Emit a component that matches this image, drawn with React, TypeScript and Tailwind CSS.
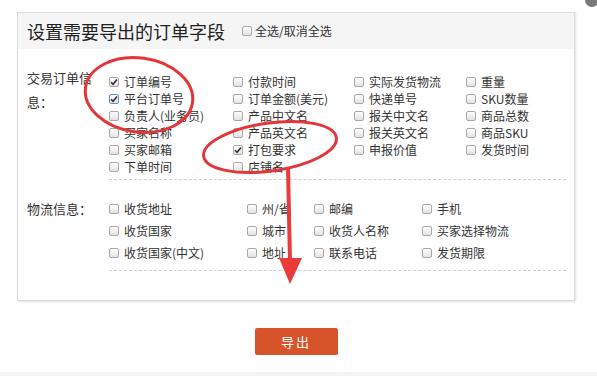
import React from 'react';

type Item = { label: string; checked?: boolean; focus?: boolean };

const orderCols: { w: string; items: Item[] }[] = [
  {
    w: 'w-[124px]',
    items: [
      { label: '订单编号', checked: true },
      { label: '平台订单号', checked: true, focus: true },
      { label: '负责人(业务员)' },
      { label: '买家名称' },
      { label: '买家邮箱' },
      { label: '下单时间' },
    ],
  },
  {
    w: 'w-[121px]',
    items: [
      { label: '付款时间' },
      { label: '订单金额(美元)' },
      { label: '产品中文名' },
      { label: '产品英文名' },
      { label: '打包要求', checked: true },
      { label: '店铺名' },
    ],
  },
  {
    w: 'w-[112px]',
    items: [
      { label: '实际发货物流' },
      { label: '快递单号' },
      { label: '报关中文名' },
      { label: '报关英文名' },
      { label: '申报价值' },
    ],
  },
  {
    w: 'w-[98px]',
    items: [{ label: '重量' }, { label: 'SKU数量' }, { label: '商品总数' }, { label: '商品SKU' }, { label: '发货时间' }],
  },
];

const shipCols: { w: string; items: Item[] }[] = [
  { w: 'w-[138px]', items: [{ label: '收货地址' }, { label: '收货国家' }, { label: '收货国家(中文)' }] },
  { w: 'w-[67px]', items: [{ label: '州/省' }, { label: '城市' }, { label: '地址' }] },
  { w: 'w-[108px]', items: [{ label: '邮编' }, { label: '收货人名称' }, { label: '联系电话' }] },
  { w: 'w-[120px]', items: [{ label: '手机' }, { label: '买家选择物流' }, { label: '发货期限' }] },
];

function Box({ checked, focus }: { checked?: boolean; focus?: boolean }) {
  return (
    <span
      className={
        'relative inline-flex items-center justify-center w-[10px] h-[10px] shrink-0 rounded-[2px] border bg-gradient-to-b from-white to-[#e2e2e2] ' +
        (focus ? 'border-[#6b8fd6]' : 'border-[#a9a9a9]')
      }
    >
      {checked && (
        <svg width="8" height="8" viewBox="0 0 8 8" className="block">
          <path d="M1 4.2 L3.1 6.3 L7 1.4" fill="none" stroke="#333" strokeWidth="1.6" />
        </svg>
      )}
    </span>
  );
}

function Check({ item, rowH }: { item: Item; rowH: string }) {
  return (
    <div className={'flex items-center whitespace-nowrap ' + rowH}>
      <Box checked={item.checked} focus={item.focus} />
      <span className="ml-[5px]">{item.label}</span>
    </div>
  );
}

export default function App() {
  return (
    <div
      className="relative w-[597px] h-[376px] bg-white overflow-hidden text-[#333]"
      style={{ fontFamily: '"Noto Sans CJK SC", "Noto Sans", sans-serif' }}
    >
      <div className="pt-[12px] pl-[17px]">
        <div className="w-[558px] h-[289px] border border-[#dcdcdc] bg-white shadow-[1px_1px_2px_rgba(0,0,0,0.12)]">
          <div className="h-[36px] bg-[#f5f5f5] flex items-center pl-[9px]">
            <h1 className="text-[18px] text-[#222] leading-none">设置需要导出的订单字段</h1>
            <div className="flex items-center ml-[17px] text-[12px]">
              <Box />
              <span className="ml-[3px]">全选/取消全选</span>
            </div>
          </div>

          <div className="flex pt-[17px] pl-[9px]">
            <div className="w-[72px] text-[13px] leading-[24px]">交易订单信息：</div>
            <div className="ml-[10px] mt-[7px] w-[457px] border-b border-dashed border-[#cfcfcf] pb-[4px] flex text-[12px]">
              {orderCols.map((c, i) => (
                <div key={i} className={c.w}>
                  {c.items.map(it => (
                    <Check key={it.label} item={it} rowH="h-[17px]" />
                  ))}
                </div>
              ))}
            </div>
          </div>

          <div className="flex pt-[18px] pl-[9px]">
            <div className="w-[72px] text-[13px] leading-[22px] -mt-[0px]">物流信息：</div>
            <div className="ml-[10px] w-[457px] border-b border-dashed border-[#cfcfcf] pb-[6px] flex text-[12px]">
              {shipCols.map((c, i) => (
                <div key={i} className={c.w}>
                  {c.items.map(it => (
                    <Check key={it.label} item={it} rowH="h-[22px]" />
                  ))}
                </div>
              ))}
            </div>
          </div>
        </div>
      </div>

      <div className="flex justify-center w-[592px] mt-[27px]">
        <button className="w-[83px] h-[27px] rounded-[2px] bg-[#d7532a] text-white text-[13px] tracking-[2px]">
          导出
        </button>
      </div>

      <div className="absolute left-0 bottom-0 w-full h-[4px] bg-[#f4f4f4]" />
      <div className="absolute left-[585px] -top-[7px] w-[14px] h-[14px] rounded-full bg-[#7a7a7a]" />

      {/* red annotations drawn over the form */}
      <svg className="absolute left-0 top-0 pointer-events-none" width="597" height="376">
        <ellipse cx="139" cy="95" rx="54" ry="37" transform="rotate(8 139 95)" fill="none" stroke="#e3353a" strokeWidth="3" />
        <ellipse cx="270" cy="147" rx="67" ry="24" transform="rotate(-8 270 147)" fill="none" stroke="#e3353a" strokeWidth="3" />
        <path d="M288 167 L290 262" stroke="#ea3a3a" strokeWidth="4" fill="none" />
        <polygon points="279,258 302,258 290,284" fill="#ea3a3a" />
      </svg>
    </div>
  );
}
